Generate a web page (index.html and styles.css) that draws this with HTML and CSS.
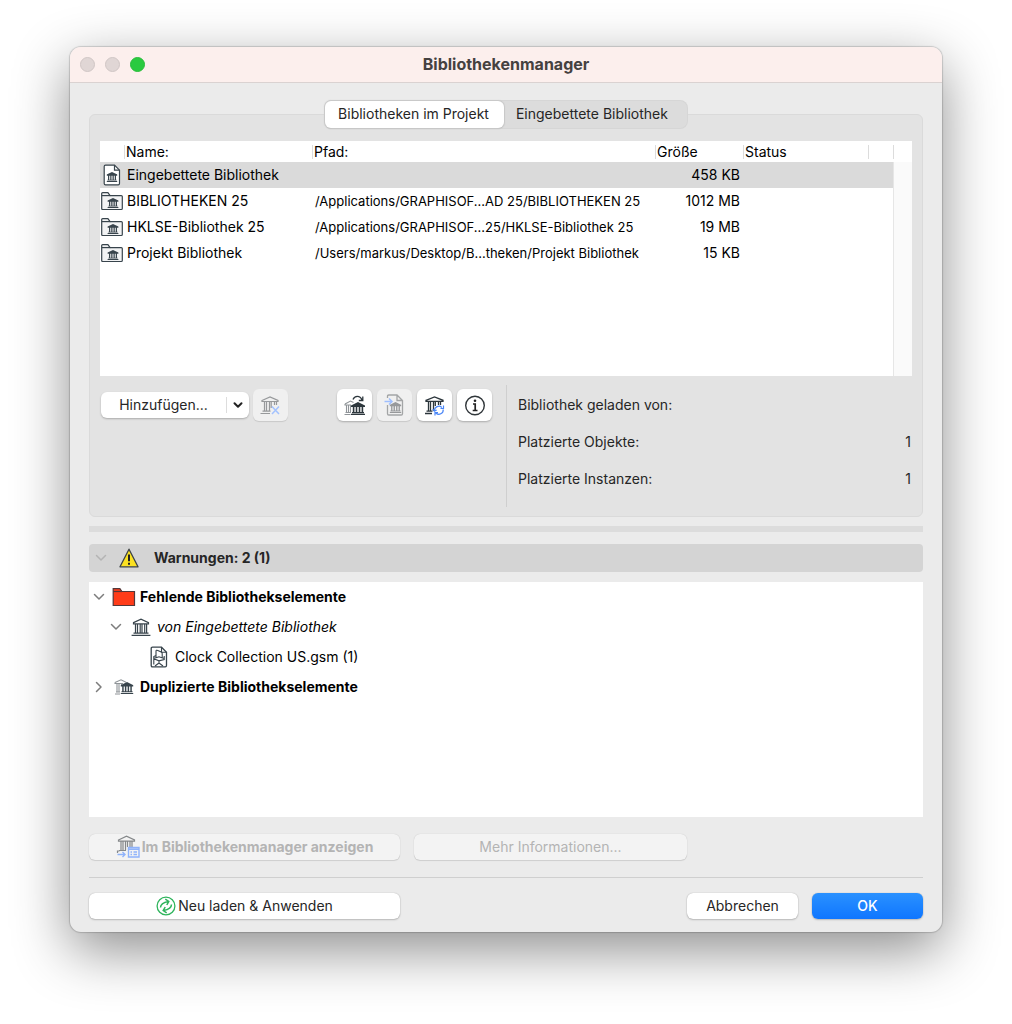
FILE: index.html
```html
<!DOCTYPE html>
<html lang="de">
<head>
<meta charset="utf-8">
<meta name="viewport" content="width=device-width, initial-scale=1">
<title>Bibliothekenmanager</title>
<link rel="stylesheet" href="styles.css">
</head>
<body>
<svg class="sprite" aria-hidden="true">
  <symbol id="bank" viewBox="0 0 20 18">
    <path d="M2.5 4.6 10 1.2l7.5 3.4v1.2h-15zM4.5 6v9M6.5 6v9M9.2 6v9M11 6v9M13.7 6v9M15.6 6v9M2.5 15.2h15M.6 17.3h18.8" fill="none" stroke="currentColor" stroke-width="1.2"/>
  </symbol>
  <symbol id="bank-solid" viewBox="0 0 14 13">
    <path d="M7 0 14 3.4V5H0V3.4zM1.8 5h1.6v5H1.8zM4.7 5h1.6v5H4.7zM7.7 5h1.6v5H7.7zM10.6 5h1.6v5h-1.6zM1 10h12v1.2H1zM0 11.8h14V13H0z" fill="currentColor"/>
  </symbol>
  <symbol id="folder-bank" viewBox="0 0 24 20">
    <path d="M1.7 17.5V2.6q0-1 1-1h5.2l2.2 3h11.2q1 0 1 1v11.9q0 1-1 1H2.7q-1 0-1-1z" fill="#f2f3f4" stroke="#38444c" stroke-width="1.2"/>
    <path d="M1.7 4.6h8.6" stroke="#38444c" stroke-width="1.2"/>
    <use href="#bank-solid" x="7" y="7" width="12" height="10"/>
  </symbol>
  <symbol id="doc-bank" viewBox="0 0 18 22">
    <path d="M1.2 19.5V2.5q0-1.3 1.3-1.3h9l5 5v13.3q0 1.3-1.3 1.3H2.5q-1.3 0-1.3-1.3z" fill="#fff" stroke="#38444c" stroke-width="1.2"/>
    <path d="M11.5 1.2v5h5" fill="none" stroke="#38444c" stroke-width="1.2"/>
    <use href="#bank-solid" x="3.5" y="8" width="11" height="10"/>
  </symbol>
  <symbol id="doc-object" viewBox="0 0 18 22">
    <path d="M1.2 19.5V2.5q0-1.3 1.3-1.3h9l5 5v13.3q0 1.3-1.3 1.3H2.5q-1.3 0-1.3-1.3z" fill="#fff" stroke="#38444c" stroke-width="1.3"/>
    <path d="M11.5 1.200v5h5M6 11.500V5.500q0-1.800 1.800-1l3.400 1.600q1 .5 1 1.600v4.500M3.800 18.500V10.500L6 9.500M3.800 12.500 9 10.800l5.200 1.700M14.200 10v3.500L9 14.800l-5.200-2M9 14.800V17M5 20l4-3 4 3" fill="none" stroke="#38444c" stroke-width="1.100"/>
  </symbol>
  <symbol id="chevron" viewBox="0 0 12 12">
    <path d="M1.500 3.500 6 8l4.500-4.500" fill="none" stroke="currentColor" stroke-width="1.500" stroke-linecap="round" stroke-linejoin="round"/>
  </symbol>
</svg>

<main class="window">
  <header class="titlebar">
    <div class="lights">
      <button class="light" type="button" aria-label="Schließen"></button>
      <button class="light" type="button" aria-label="Minimieren"></button>
      <button class="light light-zoom" type="button" aria-label="Zoomen"></button>
    </div>
    <h1 class="title">Bibliothekenmanager</h1>
  </header>

  <div class="content">
    <div class="tabs" role="tablist">
      <button class="tab tab-active" type="button" role="tab" aria-selected="true">Bibliotheken im Projekt</button>
      <button class="tab" type="button" role="tab" aria-selected="false">Eingebettete Bibliothek</button>
    </div>

    <section class="panel">
      <table class="libraries">
        <colgroup><col class="col-icon"><col class="col-name"><col class="col-path"><col class="col-size"><col class="col-status"><col class="col-flag"><col class="col-track"></colgroup>
        <thead>
          <tr>
            <th></th>
            <th><span class="head">Name:</span></th>
            <th><span class="head">Pfad:</span></th>
            <th><span class="head">Größe</span></th>
            <th><span class="head">Status</span></th>
            <th><span class="head"></span></th>
            <th><span class="head"></span></th>
          </tr>
        </thead>
        <tbody>
          <tr class="selected">
            <td><svg class="cell-icon" width="18" height="22"><use href="#doc-bank"/></svg></td>
            <td>Eingebettete Bibliothek</td><td></td><td class="size">458 KB</td><td></td><td></td>
            <td class="track" rowspan="5"></td>
          </tr>
          <tr>
            <td><svg class="cell-icon" width="24" height="20"><use href="#folder-bank"/></svg></td>
            <td>BIBLIOTHEKEN 25</td><td class="path">/Applications/GRAPHISOF...AD 25/BIBLIOTHEKEN 25</td><td class="size">1012 MB</td><td></td><td></td>
          </tr>
          <tr>
            <td><svg class="cell-icon" width="24" height="20"><use href="#folder-bank"/></svg></td>
            <td>HKLSE-Bibliothek 25</td><td class="path">/Applications/GRAPHISOF...25/HKLSE-Bibliothek 25</td><td class="size">19 MB</td><td></td><td></td>
          </tr>
          <tr>
            <td><svg class="cell-icon" width="24" height="20"><use href="#folder-bank"/></svg></td>
            <td>Projekt Bibliothek</td><td class="path">/Users/markus/Desktop/B...theken/Projekt Bibliothek</td><td class="size">15 KB</td><td></td><td></td>
          </tr>
          <tr class="filler"><td colspan="6"></td></tr>
        </tbody>
      </table>

      <div class="details">
        <div class="toolbar">
          <div class="split">
            <button class="split-main" type="button">Hinzufügen...</button>
            <button class="split-arrow" type="button" aria-label="Weitere Optionen"><svg width="12" height="12" viewBox="0 0 12 12"><path d="M2.500 4.200 6 7.700l3.500-3.500" fill="none" stroke="#222" stroke-width="2" stroke-linecap="round" stroke-linejoin="round"/></svg></button>
          </div>
          <button class="tool" type="button" disabled aria-label="Entfernen">
            <svg width="22" height="22" viewBox="0 0 22 22"><path d="M2 6.500 10 3 18 6.500v1H2zM4.500 8V17M6.500 8V17M9.500 8V17M11.200 8V14M14.500 8V11M16.500 8V11M2.500 17.200h8M.5 19.500H10" fill="none" stroke="#97999b" stroke-width="1.200"/><path d="m12 12.500 7 7.500M19 12.500 12 20" stroke="#a3c2ff" stroke-width="1.500"/></svg>
          </button>
          <div class="tool-group">
            <button class="tool" type="button" aria-label="Duplikate">
              <svg width="22" height="22" viewBox="0 0 22 22"><path d="M1 10 6.500 7l3 1.500M1 10v1h6M2.500 11.500V18M4.500 11.500V18M6.500 11.500V18M1.500 18.500H7M.5 20.500H6.500" fill="none" stroke="#8f9498" stroke-width="1.100"/><path d="M9 5.500C10.500 1.500 16 1 18 6M18.800 2.500v4h-4" fill="none" stroke="#2c363c" stroke-width="1.300"/><svg x="7" y="8" width="14" height="13" viewBox="0 0 14 13"><use href="#bank-solid"/></svg></svg>
            </button>
            <button class="tool" type="button" disabled aria-label="Einbetten">
              <svg width="22" height="22" viewBox="0 0 22 22"><path d="M3.500 4V2.300Q3.500 1 4.800 1h8.200L18.500 6.500v13.200q0 1.300-1.300 1.300H4.800Q3.500 21 3.500 19.700V11M13 1v5.500H18.500" fill="none" stroke="#a3a5a6" stroke-width="1.300"/><path d="M.5 7.500h7M5 4.500l3 3-3 3" fill="none" stroke="#9fbfff" stroke-width="1.500"/><svg class="muted" x="5.500" y="8" width="12" height="11" viewBox="0 0 14 13"><use href="#bank-solid"/></svg></svg>
            </button>
            <button class="tool" type="button" aria-label="Neu laden">
              <svg width="22" height="22" viewBox="0 0 22 22"><path d="M2 6.300 10.500 3 19 6.300v1H2zM4.500 8V17M6.500 8V17M9.500 8V17M11.300 8V12M14.500 8V11M16.500 8V11M2.500 17.200h6M1 19.500h7" fill="none" stroke="#2c363c" stroke-width="1.300"/><path d="M10.500 16.500a4.300 4.300 0 0 1 7.300-3M19.200 15.500a4.300 4.300 0 0 1-7.300 3.500M19.500 11.500v3h-3M8.800 15l1.500 2.200 2.400-1.200M11 21.500v-3h3" fill="none" stroke="#4a86f7" stroke-width="1.200"/></svg>
            </button>
            <button class="tool" type="button" aria-label="Information">
              <svg width="22" height="22" viewBox="0 0 22 22"><circle cx="11" cy="11.500" r="9.300" fill="none" stroke="#30363a" stroke-width="1.400"/><circle cx="11" cy="6.800" r="1.300" fill="#222"/><path d="M9 10h2.200V16M8.700 16.500h4.800" fill="none" stroke="#222" stroke-width="1.700"/></svg>
            </button>
          </div>
        </div>
        <dl class="facts">
          <div class="fact"><dt>Bibliothek geladen von:</dt><dd></dd></div>
          <div class="fact"><dt>Platzierte Objekte:</dt><dd>1</dd></div>
          <div class="fact"><dt>Platzierte Instanzen:</dt><dd>1</dd></div>
        </dl>
      </div>
    </section>

    <div class="splitter"></div>

    <h2 class="warnings">
      <svg class="warn-chevron" width="12" height="12"><use href="#chevron"/></svg>
      <svg width="20" height="20" viewBox="0 0 20 20"><path d="M10 1.200 19 18.800H1z" fill="#fbe122" stroke="#3d4347" stroke-width="1.300" stroke-linejoin="round"/><path d="M10 6.500v6.800M10 14.800v2" stroke="#222" stroke-width="2"/></svg>
      <span class="warn-text">Warnungen: 2 (1)</span>
    </h2>

    <ul class="tree" role="tree">
      <li class="node strong" role="treeitem" aria-expanded="true">
        <svg class="twisty" width="12" height="12"><use href="#chevron"/></svg>
        <svg width="24" height="20" viewBox="0 0 24 20"><path d="M1.200 18.500V1.700h6.700l2 2.800H22.500v14z" fill="#ff3c19" stroke="#54383a" stroke-width="1.200"/><path d="M1.200 4.500h9" stroke="#54383a" stroke-width="1.200"/></svg>
        <span>Fehlende Bibliothekselemente</span>
      </li>
      <li class="node level-2" role="treeitem" aria-expanded="true">
        <svg class="twisty" width="12" height="12"><use href="#chevron"/></svg>
        <svg width="20" height="18"><use href="#bank"/></svg>
        <em>von Eingebettete Bibliothek</em>
      </li>
      <li class="node level-3" role="treeitem">
        <svg width="18" height="22"><use href="#doc-object"/></svg>
        <span>Clock Collection US.gsm (1)</span>
      </li>
      <li class="node strong" role="treeitem" aria-expanded="false">
        <svg class="twisty twisty-closed" width="12" height="12"><use href="#chevron"/></svg>
        <svg width="24" height="20" viewBox="0 0 24 20"><path d="M3 5.500 9 2.800l5 2.400M3 5.500v1h8M5 7v8M7 7v8M9.500 7v2M4 15h4M3 17h5" fill="none" stroke="#8f9498" stroke-width="1.100"/><svg x="8.500" y="5" width="13" height="12" viewBox="0 0 14 13"><use href="#bank-solid"/></svg></svg>
        <span>Duplizierte Bibliothekselemente</span>
      </li>
    </ul>

    <div class="actions">
      <button class="btn btn-wide btn-show" type="button" disabled>
        <svg width="24" height="24" viewBox="0 0 24 24"><path d="M2.500 5 10.500 1.200 18.500 5v1.200h-16zM5 6.500V15M7 6.500V15M9.500 6.500V15M11.500 6.500V12M14 6.500V12M16 6.500V12M3 15.500h7M1.500 18v-2h2" fill="none" stroke="#85888a" stroke-width="1.200"/><path d="M12.500 12.500h10.500v9.500h-10.500zM12.500 14.300h10.500M14.500 17h1.500M17.500 17H21M14.500 19.500H16M17.500 19.500H21M1.500 19.500H9M6.500 17 9 19.500 6.500 22" fill="none" stroke="#8fb3fb" stroke-width="1.400"/></svg>
        <span>Im Bibliothekenmanager anzeigen</span>
      </button>
      <button class="btn btn-info" type="button" disabled>Mehr Informationen...</button>
    </div>

    <footer class="footer">
      <button class="btn btn-wide" type="button">
        <svg width="20" height="20" viewBox="0 0 20 20"><circle cx="10" cy="10" r="8.900" fill="none" stroke="#2fb45c" stroke-width="1.300"/><path d="M4.500 11.500Q4.500 7 12.500 5.500M9.300 3.200l3.500 2.200-2 3.600M15.500 8.500Q15.500 13 7.500 14.500M10.700 16.800l-3.500-2.200 2-3.600" fill="none" stroke="#2fb45c" stroke-width="1.500"/></svg>
        <span>Neu laden &amp; Anwenden</span>
      </button>
      <div class="confirm">
        <button class="btn btn-small" type="button">Abbrechen</button>
        <button class="btn btn-small btn-primary" type="button">OK</button>
      </div>
    </footer>
  </div>
</main>
</body>
</html>
```
FILE: styles.css
```css
* {
  box-sizing: border-box;
}

body {
  margin: 0;
  padding: 47px 70px 92px;
  background: #fff;
  color: #000;
  font: 14px/18px Inter, "Liberation Sans", sans-serif;
}

button {
  margin: 0;
  padding: 0;
  border: 0;
  background: none;
  color: #262626;
  font: inherit;
}

svg {
  display: block;
  flex: none;
}

.sprite {
  position: absolute;
  width: 0;
  height: 0;
}

.window {
  border-radius: 11px;
  background: #ebebeb;
  box-shadow: 0 0 1px 1px rgba(0, 0, 0, 0.16), 0 18px 56px rgba(0, 0, 0, 0.45);
}

.titlebar {
  display: grid;
  grid-template-columns: 1fr auto 1fr;
  align-items: center;
  height: 36px;
  padding: 0 10px;
  border-bottom: 1px solid #dad2d1;
  border-radius: 11px 11px 0 0;
  background: #fcefed;
}

.lights {
  display: flex;
  gap: 10px;
}

.light {
  width: 15px;
  height: 15px;
  border: 1px solid #d0c6c5;
  border-radius: 50%;
  background: #e0d6d5;
}

.light-zoom {
  border-color: #28bd3a;
  background: #2aca40;
}

.title {
  margin: 0;
  padding-bottom: 2px;
  color: #454140;
  font-size: 16px;
  font-weight: 700;
}

.content {
  padding: 18px 19px 13px;
}

.tabs {
  position: relative;
  display: flex;
  width: max-content;
  height: 27px;
  margin: 0 auto -14px;
  border-radius: 7px;
  background: #dcdcdc;
  box-shadow: 0 0 0 1px #d6d6d6;
}

.tab {
  padding: 0 19px 2px 12px;
  border-radius: 6px;
}

.tab-active {
  padding: 0 15px 2px 13px;
  background: #fff;
  box-shadow: 0 0 1px 1px #c8c8c8, 0 1px 1px #bbb;
}

.panel {
  padding: 26px 10px 9px;
  border: 1px solid #dadada;
  border-radius: 6px;
  background: #e3e3e3;
}

.libraries {
  width: 100%;
  border-collapse: collapse;
  table-layout: fixed;
  background: #fff;
}

.col-icon { width: 24px; }
.col-name { width: 188px; }
.col-size { width: 88px; }
.col-status { width: 125px; }
.col-flag { width: 25px; }
.col-track { width: 19px; }

.libraries th {
  height: 21px;
  padding: 0;
  font-weight: 400;
  text-align: left;
}

.head {
  display: block;
  height: 14px;
  padding-left: 1px;
  border-left: 1px solid #dcdcdc;
  line-height: 14px;
}

.libraries td {
  height: 26px;
  padding: 0 0 0 3px;
  white-space: nowrap;
}

.libraries td:first-child {
  padding: 0;
}

.libraries .path {
  font-size: 13px;
}

.libraries .size {
  padding-right: 3px;
  text-align: right;
}

.selected {
  background: #dadada;
}

.cell-icon {
  margin: 0 auto;
  color: #38444c;
}

.filler td {
  height: 110px;
}

.libraries .track {
  border-left: 1px solid #e6e6e6;
  background: #fafafa;
}

.details {
  display: grid;
  grid-template-columns: 1fr 1fr;
  margin-top: 9px;
}

.toolbar {
  display: flex;
  align-items: flex-start;
  gap: 4px;
  padding-top: 4px;
  padding-left: 1px;
}

.split {
  display: flex;
  align-items: center;
  height: 26px;
  width: 148px;
  margin-top: 3px;
  border-radius: 6px;
  background: #fff;
  box-shadow: 0 1px 2px rgba(0, 0, 0, 0.25);
}

.split-main {
  flex: 1;
}

.split-arrow {
  padding: 2px 5px;
  border-left: 1px solid #ddd;
}

.tool {
  display: flex;
  align-items: center;
  justify-content: center;
  width: 35px;
  height: 32px;
  border-radius: 6px;
  background: #fff;
  color: #2c363c;
  box-shadow: 0 1px 2px rgba(0, 0, 0, 0.25);
}

.tool:disabled {
  background: #f0f0f0;
  box-shadow: 0 1px 1px rgba(0, 0, 0, 0.12);
}

.muted {
  color: #97999b;
}

.tool-group {
  display: flex;
  gap: 5px;
  margin-left: auto;
  margin-right: 14px;
}

.facts {
  height: 122px;
  margin: 0;
  padding: 1px 1px 0 11px;
  border-left: 1px solid #cfcfcf;
  color: #262626;
}

.fact {
  display: flex;
  align-items: center;
  justify-content: space-between;
  height: 37px;
}

.fact dd {
  margin: 0;
}

.splitter {
  height: 6px;
  margin: 9px 0 12px;
  background: #dcdcdc;
}

.warnings {
  display: flex;
  align-items: center;
  height: 28px;
  margin: 0 0 10px;
  padding-left: 6px;
  border-radius: 4px;
  background: #d4d4d4;
  color: #262626;
  font-size: 14px;
  font-weight: 700;
}

.warn-chevron {
  margin-right: 12px;
  color: #b4b4b4;
}

.warn-text {
  margin-left: 15px;
}

.tree {
  min-height: 235px;
  margin: 0;
  padding: 0 4px;
  background: #fff;
  list-style: none;
}

.node {
  display: flex;
  align-items: center;
  gap: 4px;
  height: 30px;
}

.node svg {
  color: #38444c;
}

.strong {
  font-weight: 700;
}

.level-2 {
  gap: 6px;
  padding-left: 17px;
}

.level-3 {
  gap: 7px;
  padding-left: 57px;
}

.node .twisty {
  margin-right: 3px;
  color: #7d7d7d;
}

.twisty-closed {
  transform: rotate(-90deg);
}

.actions {
  display: flex;
  gap: 14px;
  padding: 17px 0;
  border-bottom: 1px solid #cfcfcf;
}

.footer {
  display: flex;
  justify-content: space-between;
  padding-top: 15px;
}

.btn {
  display: flex;
  align-items: center;
  justify-content: center;
  gap: 2px;
  height: 26px;
  border-radius: 6px;
  background: #fff;
  box-shadow: 0 0 1px rgba(0, 0, 0, 0.3), 0 1px 2px rgba(0, 0, 0, 0.2);
}

.btn:disabled {
  background: #f3f3f3;
  box-shadow: 0 0 1px rgba(0, 0, 0, 0.2), 0 1px 1px rgba(0, 0, 0, 0.1);
  color: #b4b4b4;
}

.btn-wide {
  width: 311px;
}

.btn-show {
  font-weight: 700;
}

.btn-info {
  width: 273px;
}

.confirm {
  display: flex;
  gap: 14px;
}

.btn-small {
  width: 111px;
}

.btn-primary {
  background: linear-gradient(#2a91ff, #0f76ff);
  color: #fff;
  font-weight: 500;
}
```
